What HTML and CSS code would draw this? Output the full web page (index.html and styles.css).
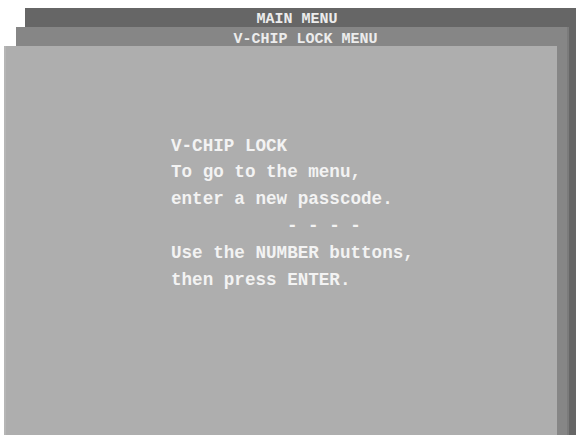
FILE: index.html
```html
<!DOCTYPE html>
<html>
<head>
<meta charset="utf-8">
<link rel="stylesheet" href="styles.css">
</head>
<body>
<div class="main">
  <div class="title main-title">MAIN MENU</div>
  <div class="sub">
    <div class="title sub-title">V-CHIP LOCK MENU</div>
    <div class="inner">
      <div class="msg">
        <div class="line">V-CHIP LOCK</div>
        <div class="line">To go to the menu,</div>
        <div class="line">enter a new passcode.</div>
        <div class="line dashes">- - - -</div>
        <div class="line">Use the NUMBER buttons,</div>
        <div class="line">then press ENTER.</div>
      </div>
    </div>
  </div>
</div>
</body>
</html>
```

FILE: styles.css
```css
html, body {
  margin: 0;
  padding: 0;
  height: 100%;
  background: #ffffff;
  overflow: hidden;
}
body {
  display: flex;
  flex-direction: column;
  font-family: "Liberation Mono", "Courier New", monospace;
}
.main {
  margin: 8px 3px 0 25px;
  flex: 1;
  display: flex;
  flex-direction: column;
  background: #666666;
}
.title {
  box-sizing: border-box;
  height: 19px;
  line-height: 19px;
  font-size: 15px;
  font-weight: bold;
  color: #ececec;
  text-align: center;
  white-space: pre;
}
.main-title {
  padding-top: 2px;
  padding-right: 7px;
}
.sub {
  margin: 0 7px 0 -9px;
  flex: 1;
  display: flex;
  flex-direction: column;
  background: #868686;
  border-right: 2px solid #7b7b7b;
}
.sub-title {
  padding-top: 3px;
  padding-left: 28px;
}
.inner {
  margin: 0 10px 0 -12px;
  flex: 1;
  background: #aeaeae;
  border-left: 2px solid #b6b6b6;
  box-sizing: border-box;
  padding: 86.6px 0 0 165px;
}
.msg {
  font-size: 17.6px;
  line-height: 26.86px;
  font-weight: bold;
  color: #f3f3f3;
}
.line {
  white-space: pre;
}
.dashes {
  padding-left: 116px;
}
```
